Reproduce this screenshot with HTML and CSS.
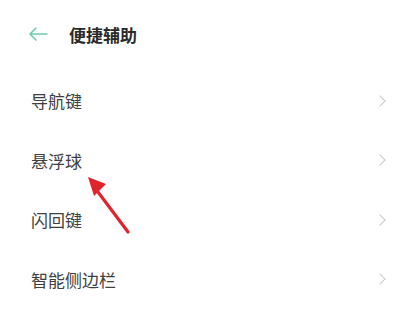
FILE: index.html
```html
<!DOCTYPE html>
<html lang="zh-CN">
<head>
<meta charset="UTF-8">
<meta name="viewport" content="width=device-width, initial-scale=1.0">
<title>便捷辅助</title>
<link rel="stylesheet" href="styles.css">
</head>
<body>

<div class="screen">
  <div class="header">
    <svg class="back" width="20" height="14" viewBox="0 0 20 14">
      <path d="M19 7H2M8 1L2 7l6 6" fill="none" stroke="#6ccdb0" stroke-width="1.6" stroke-linecap="round" stroke-linejoin="round"/>
    </svg>
    <div class="title">便捷辅助</div>
  </div>

  <div class="list">
    <div class="item"><span>导航键</span><i class="chev"></i></div>
    <div class="item"><span>悬浮球</span><i class="chev"></i></div>
    <div class="item"><span>闪回键</span><i class="chev"></i></div>
    <div class="item"><span>智能侧边栏</span><i class="chev"></i></div>
  </div>

  <svg class="pointer" width="60" height="70" viewBox="0 0 60 70">
    <line x1="18" y1="22" x2="48" y2="62" stroke="#e0242b" stroke-width="3.2" stroke-linecap="round"/>
    <polygon points="8,7 26,14 14,26" fill="#e0242b"/>
  </svg>
</div>

</body>
</html>
```

FILE: styles.css
```css
body, html {
  margin: 0;
  padding: 0;
  background: #fff;
  font-family: "Noto Sans CJK SC", "Noto Sans", sans-serif;
}
.screen {
  position: relative;
  width: 411px;
  height: 315px;
  overflow: hidden;
}
.header {
  display: flex;
  align-items: center;
  height: 36px;
  padding: 16px 0 0 28px;
}
.back {
  margin-right: 21px;
}
.title {
  font-size: 17px;
  font-weight: bold;
  color: #2a2a2a;
}
.list {
  margin-top: 19px;
}
.item {
  display: flex;
  align-items: center;
  justify-content: space-between;
  height: 59.5px;
  padding: 0 27px 0 31px;
  font-size: 17px;
  color: #404040;
}
.chev {
  width: 7px;
  height: 7px;
  border-top: 1.2px solid #cacaca;
  border-right: 1.2px solid #cacaca;
  transform: rotate(45deg);
}
.pointer {
  position: absolute;
  left: 80px;
  top: 170px;
}
```
